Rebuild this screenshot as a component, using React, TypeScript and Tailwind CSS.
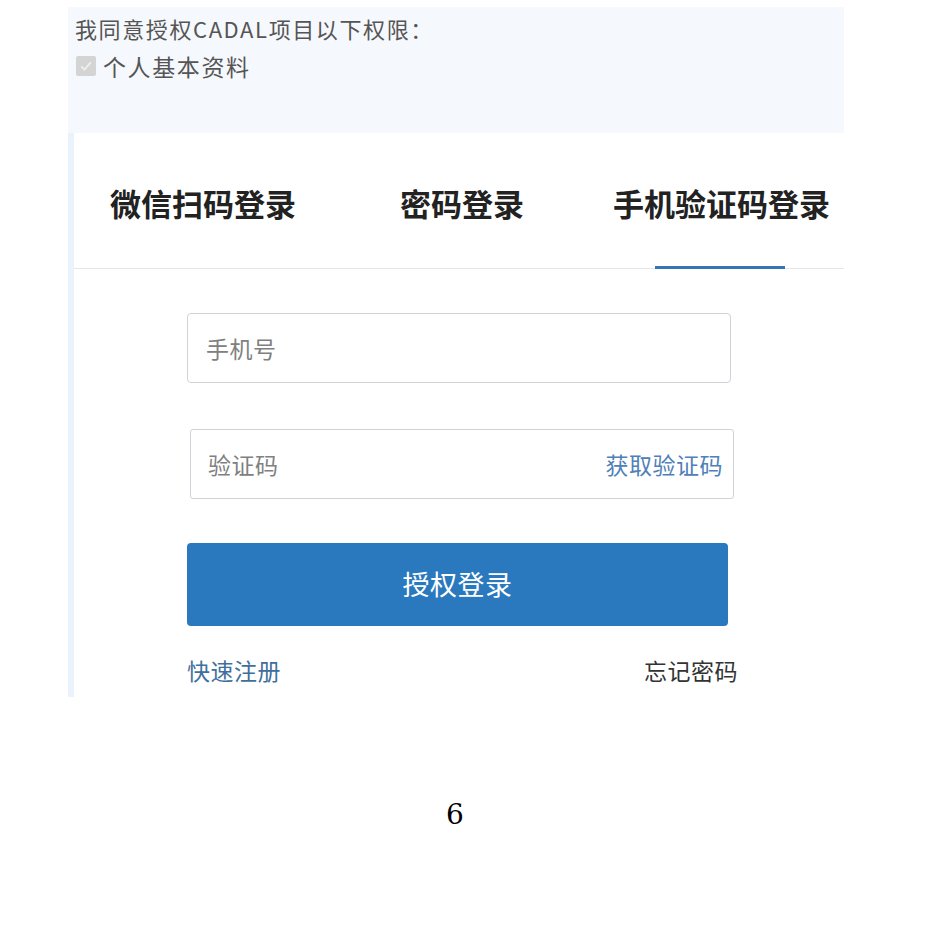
import React from 'react';

const cjk = { fontFamily: '"Noto Sans CJK SC", "Noto Sans", sans-serif' };

export default function App() {
  return (
    <div className="w-[944px] h-[926px] bg-white relative overflow-hidden" style={cjk}>
      <div className="pt-[7px] pl-[68px]">
        <div className="w-[776px] h-[690px] bg-[#f5f8fc] flex flex-col overflow-hidden">
          {/* permission header */}
          <div className="h-[126px] pl-[7px] pt-[5px] text-[#555]">
            <p className="text-[22px] leading-[32px] tracking-[1.6px]">我同意授权CADAL项目以下权限：</p>
            <label className="flex items-center gap-[7px] mt-[6px]">
              <span className="w-[20px] h-[20px] ml-[1px] rounded-[2px] bg-[#d4d4d4] flex items-center justify-center">
                <svg viewBox="0 0 20 20" className="w-[16px] h-[16px]">
                  <path d="M4 10.5l4 4 8-9" fill="none" stroke="#eee" strokeWidth="2.4" />
                </svg>
              </span>
              <span className="text-[23px] leading-[32px] tracking-[1.6px]">个人基本资料</span>
            </label>
          </div>

          {/* login card */}
          <div className="flex-1 flex">
            <div className="w-[6px] bg-[#eaf2fb]" />
            <div className="flex-1 bg-white flex flex-col">
              <div className="h-[136px] border-b border-[#e3e6ea] flex pl-[36px]">
                <div className="flex flex-col pt-[49px]">
                  <span className="text-[31px] leading-[42px] font-bold text-[#222]">微信扫码登录</span>
                </div>
                <div className="flex flex-col pt-[49px] ml-[104px]">
                  <span className="text-[31px] leading-[42px] font-bold text-[#222]">密码登录</span>
                </div>
                <div className="flex flex-col items-center pt-[49px] ml-[89px]">
                  <span className="text-[31px] leading-[42px] font-bold text-[#222]">手机验证码登录</span>
                  <span className="mt-auto w-[130px] h-[3px] bg-[#3576b4] translate-y-[1px] -translate-x-[2px]" />
                </div>
              </div>

              <div className="pl-[113px] pt-[44px] flex flex-col">
                <div className="w-[544px] h-[70px] border border-[#cfd3d8] rounded-[4px] flex items-center px-[18px]">
                  <span className="text-[23px] tracking-[0.5px] text-[#808080]">手机号</span>
                </div>
                <div className="w-[544px] h-[70px] mt-[46px] ml-[3px] border border-[#cfd3d8] rounded-[3px] flex items-center justify-between pl-[17px] pr-[10px]">
                  <span className="text-[23px] tracking-[0.5px] text-[#808080]">验证码</span>
                  <span className="text-[23px] tracking-[0.5px] text-[#4f80b8]">获取验证码</span>
                </div>
                <button className="w-[541px] h-[83px] mt-[44px] rounded-[4px] bg-[#2a79be] text-white text-[27px] tracking-[0.5px] flex items-center justify-center">
                  授权登录
                </button>
                <div className="w-[551px] flex justify-between mt-[28px]">
                  <span className="text-[23px] leading-[32px] tracking-[0.5px] text-[#3f6f9c]">快速注册</span>
                  <span className="text-[23px] leading-[32px] tracking-[0.5px] text-[#333]">忘记密码</span>
                </div>
              </div>
            </div>
          </div>
        </div>
      </div>

      <div className="mt-[100px] pl-[446px] text-[28px] leading-[36px] text-black" style={{ fontFamily: '"DejaVu Serif", "Liberation Serif", serif' }}>
        6
      </div>
    </div>
  );
}
